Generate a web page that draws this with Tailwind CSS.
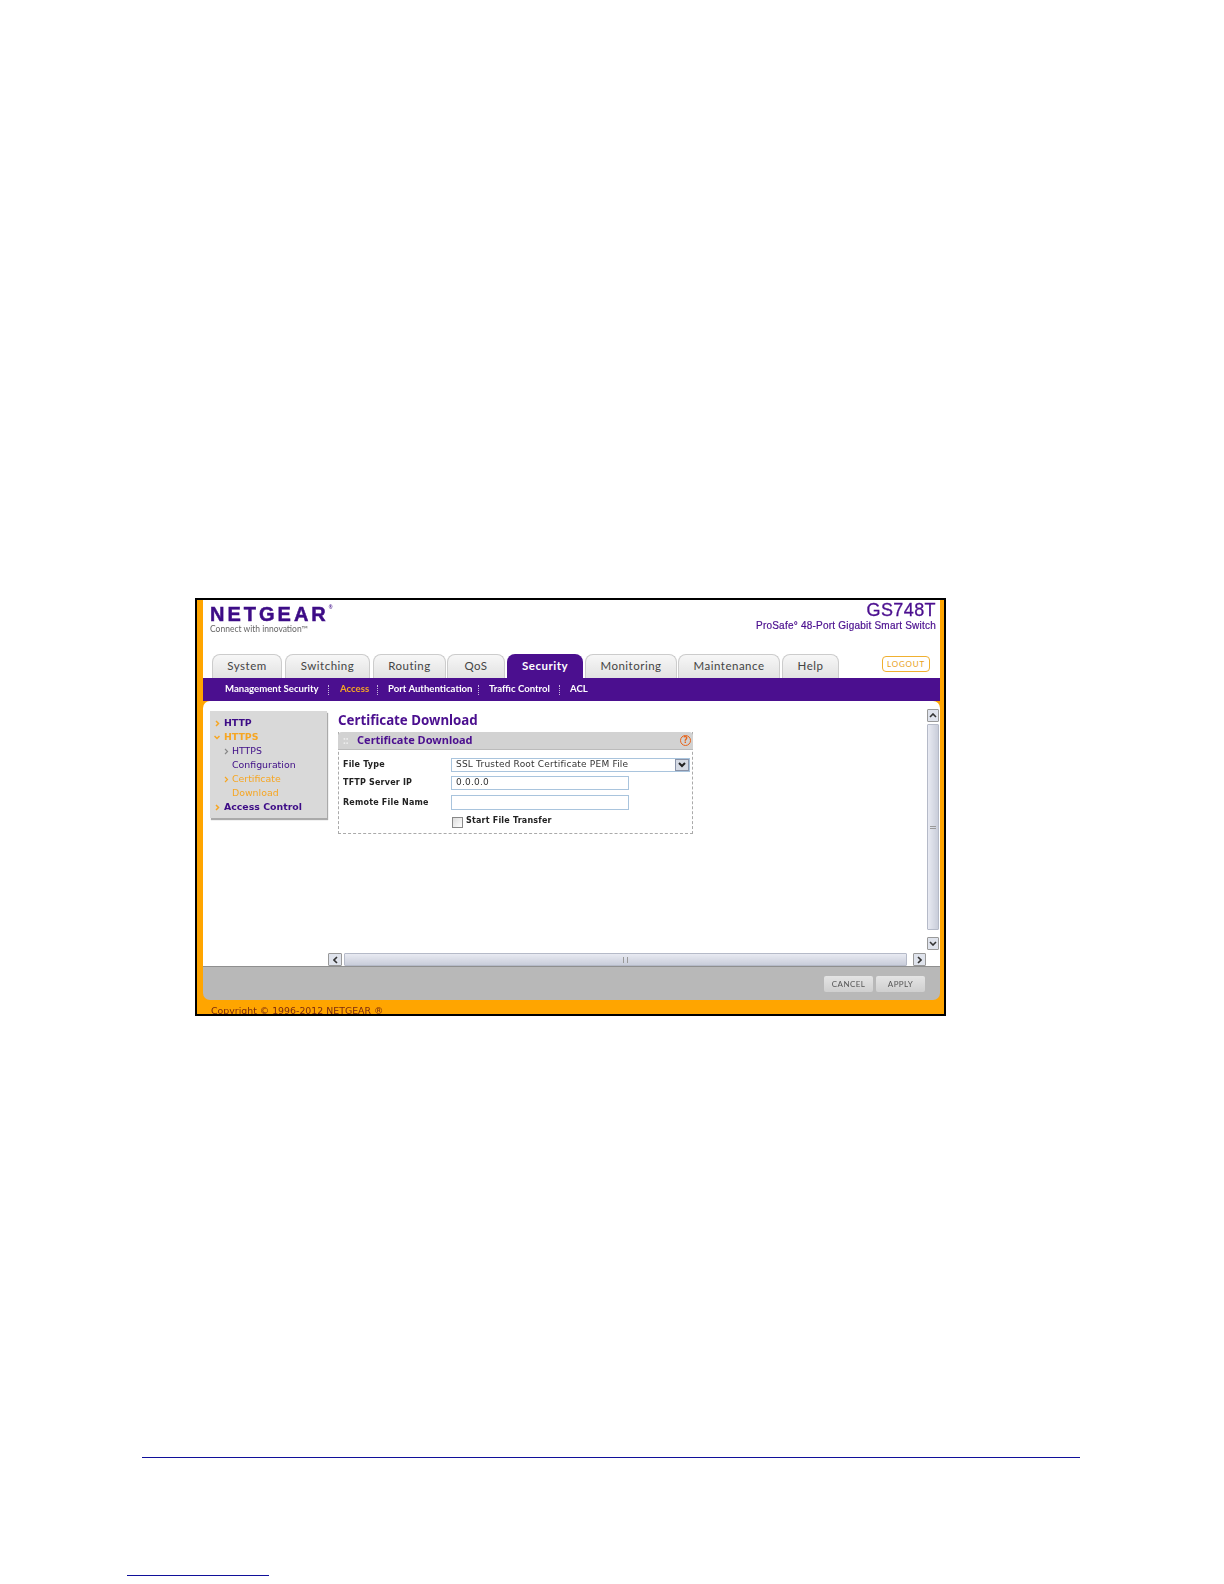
<!DOCTYPE html>
<html lang="en">
<head>
  <meta charset="UTF-8" />
  <title>Certificate Download</title>
  <script src="https://cdn.jsdelivr.net/npm/@tailwindcss/browser@4"></script>
</head>
<body class="bg-white">
  <div class="w-[1224px] h-[1584px] overflow-hidden relative pt-[598px]">

    <!-- switch admin screenshot -->
    <div class="ml-[195px] w-[751px] h-[418px] border-2 border-black bg-[#ffa500] pl-[6px] pr-[4px] font-['Lato',sans-serif]">
      <div class="blur-[0.35px]">

      <!-- header -->
      <div class="h-[54px] bg-white flex justify-between pl-[7px] pr-[4px]">
        <div class="pt-[3px]">
          <div class="h-[21px] flex items-start font-['Liberation_Sans',sans-serif] font-bold text-[20px] leading-[22px] tracking-[3px] text-[#3d0c86] [-webkit-text-stroke:0.5px_#3d0c86]">NETGEAR<span class="text-[5px] leading-[8px] tracking-normal [-webkit-text-stroke:0px]">®</span></div>
          <div class="text-[8.5px] leading-[11px] text-[#666]">Connect with innovation™</div>
        </div>
        <div class="text-right font-['Liberation_Sans',sans-serif] text-[#4b0f8f]">
          <div class="text-[18px] leading-[19px] mt-[1px] tracking-[0.4px] [-webkit-text-stroke:0.3px_#4b0f8f]">GS748T</div>
          <div class="text-[10px] leading-[11px] tracking-[0.22px] [-webkit-text-stroke:0.2px_#4b0f8f]">ProSafe° 48-Port Gigabit Smart Switch</div>
        </div>
      </div>

      <!-- tabs -->
      <div class="h-[24px] bg-white flex items-stretch text-[11.5px] tracking-[0.5px] text-[#444] relative">
        <div class="w-[9px]"></div>
        <div class="w-[70px] mr-[3px] rounded-t-[8px] border border-b-0 border-[#ccc] bg-gradient-to-b from-[#f7f7f7] to-[#e2e2e2] flex items-center justify-center pb-[1px]">System</div>
        <div class="w-[85px] mr-[3px] rounded-t-[8px] border border-b-0 border-[#ccc] bg-gradient-to-b from-[#f7f7f7] to-[#e2e2e2] flex items-center justify-center pb-[1px]">Switching</div>
        <div class="w-[73px] mr-[1px] rounded-t-[8px] border border-b-0 border-[#ccc] bg-gradient-to-b from-[#f7f7f7] to-[#e2e2e2] flex items-center justify-center pb-[1px]">Routing</div>
        <div class="w-[58px] mr-[2px] rounded-t-[8px] border border-b-0 border-[#ccc] bg-gradient-to-b from-[#f7f7f7] to-[#e2e2e2] flex items-center justify-center pb-[1px]">QoS</div>
        <div class="w-[76px] mr-[2px] rounded-t-[8px] bg-[#4b0f8f] text-white font-bold flex items-center justify-center pb-[1px]">Security</div>
        <div class="w-[92px] mr-[1px] rounded-t-[8px] border border-b-0 border-[#ccc] bg-gradient-to-b from-[#f7f7f7] to-[#e2e2e2] flex items-center justify-center pb-[1px]">Monitoring</div>
        <div class="w-[102px] mr-[2px] rounded-t-[8px] border border-b-0 border-[#ccc] bg-gradient-to-b from-[#f7f7f7] to-[#e2e2e2] flex items-center justify-center pb-[1px]">Maintenance</div>
        <div class="w-[57px] rounded-t-[8px] border border-b-0 border-[#ccc] bg-gradient-to-b from-[#f7f7f7] to-[#e2e2e2] flex items-center justify-center pb-[1px]">Help</div>
        <div class="ml-[43px] mt-[2px] w-[48px] h-[16px] rounded-[4px] border border-[#f0b030] text-[#e8a020] text-[8px] tracking-[0.8px] flex items-center justify-center">LOGOUT</div>
      </div>

      <!-- sub navigation -->
      <div class="h-[23px] bg-[#4b0f8f] flex items-center pl-[22px] text-[9.6px] font-bold text-white">
        <span class="w-[95px] whitespace-nowrap">Management Security</span>
        <span class="h-[10px] ml-[8px] mr-[11px] border-l border-dotted border-white/70"></span>
        <span class="w-[30px] text-[#f6a623]">Access</span>
        <span class="h-[10px] ml-[7px] mr-[10px] border-l border-dotted border-white/70"></span>
        <span class="w-[82px] whitespace-nowrap">Port Authentication</span>
        <span class="h-[10px] ml-[8px] mr-[10px] border-l border-dotted border-white/70"></span>
        <span class="w-[63px] whitespace-nowrap">Traffic Control</span>
        <span class="h-[10px] ml-[7px] mr-[10px] border-l border-dotted border-white/70"></span>
        <span>ACL</span>
      </div>

      <!-- main panel -->
      <div class="h-[265px] bg-white rounded-t-[7px] flex pt-[8px] font-['DejaVu_Sans',sans-serif]">
        <!-- left menu -->
        <div class="w-[125px] shrink-0 pl-[7px] pt-[2px]">
          <div class="w-[117px] h-[107px] bg-[#d9d9d9] shadow-[1px_2px_1px_#aaa] pt-[5px] text-[9.4px] leading-[14px] font-bold text-[#3d0c86]">
            <div class="flex items-center h-[14px] pl-[5px]">
              <svg width="5" height="7" viewBox="0 0 5 7" fill="none" stroke="#f6a623" stroke-width="1.5" class="mr-[4px]"><path d="M1 1l2.5 2.5L1 6"/></svg>HTTP
            </div>
            <div class="flex items-center h-[14px] pl-[4px] text-[#f6a623]">
              <svg width="6" height="5" viewBox="0 0 6 5" fill="none" stroke="#f6a623" stroke-width="1.5" class="mr-[4px]"><path d="M.5 1L3 3.5 5.5 1"/></svg>HTTPS
            </div>
            <div class="flex items-center h-[14px] pl-[14px] font-normal">
              <svg width="5" height="7" viewBox="0 0 5 7" fill="none" stroke="#888" stroke-width="1.2" class="mr-[3px]"><path d="M1 1l2.5 2.5L1 6"/></svg>HTTPS
            </div>
            <div class="h-[14px] pl-[22px] font-normal">Configuration</div>
            <div class="flex items-center h-[14px] pl-[14px] font-normal text-[#f6a623]">
              <svg width="5" height="7" viewBox="0 0 5 7" fill="none" stroke="#f6a623" stroke-width="1.2" class="mr-[3px]"><path d="M1 1l2.5 2.5L1 6"/></svg>Certificate
            </div>
            <div class="h-[14px] pl-[22px] font-normal text-[#f6a623]">Download</div>
            <div class="flex items-center h-[14px] pl-[5px]">
              <svg width="5" height="7" viewBox="0 0 5 7" fill="none" stroke="#f6a623" stroke-width="1.5" class="mr-[4px]"><path d="M1 1l2.5 2.5L1 6"/></svg>Access Control
            </div>
          </div>
        </div>

        <!-- right part -->
        <div class="w-[612px] flex flex-col">
          <div class="h-[241px] flex">
            <div class="w-[599px] pl-[10px] pt-[4px]">
              <h1 class="h-[19px] text-[13.3px] leading-[15px] font-bold text-[#4b0f8f] whitespace-nowrap font-['Noto_Sans',sans-serif]">Certificate Download</h1>
              <div class="w-[355px] h-[102px] border border-dashed border-[#aaa] border-t-0">
                <div class="h-[18px] -mx-px rounded-t-[4px] bg-[#d2d2d2] flex items-center justify-between pl-[5px] pr-[2px] border-b border-[#bbb]">
                  <span class="flex items-center text-[11px] font-bold text-[#4b0f8f] whitespace-nowrap font-['Noto_Sans',sans-serif]"><span class="w-[14px] text-[#eee] text-[10px]">::</span>Certificate Download</span>
                  <span class="w-[11px] h-[11px] rounded-full border border-[#e8641a] text-[#e8641a] text-[8px] leading-[9px] text-center font-bold">?</span>
                </div>
                <div class="grid grid-cols-[108px_1fr] pl-[4px] text-[8px] font-bold text-[#222] tracking-[0.2px]">
                  <div class="h-[24px] flex items-center pt-[6px]">File Type</div>
                  <div class="h-[24px] pt-[8px] flex">
                    <div class="w-[239px] h-[14px] border border-[#a9c4dd] flex items-center justify-between pl-[4px] font-normal text-[9px] text-[#333] whitespace-nowrap">
                      SSL Trusted Root Certificate PEM File
                      <span class="w-[14px] h-[12px] bg-[#d5dae4] border border-[#8a93a8] flex items-center justify-center">
                        <svg width="8" height="6" viewBox="0 0 8 6" fill="none" stroke="#222" stroke-width="2"><path d="M1 1l3 3 3-3"/></svg>
                      </span>
                    </div>
                  </div>
                  <div class="h-[17px] flex items-center">TFTP Server IP</div>
                  <div class="h-[17px] flex items-center">
                    <div class="w-[178px] h-[14px] border border-[#a9c4dd] flex items-center pl-[4px] font-normal text-[9px] text-[#333]">0.0.0.0</div>
                  </div>
                  <div class="h-[23px] flex items-center">Remote File Name</div>
                  <div class="h-[23px] flex items-center">
                    <div class="w-[178px] h-[15px] border border-[#a9c4dd]"></div>
                  </div>
                  <div></div>
                  <div class="flex items-center pt-[2px]">
                    <span class="w-[11px] h-[11px] ml-[1px] mt-[1px] border border-[#888] bg-gradient-to-br from-[#ddd] to-white"></span>
                    <span class="ml-[3px] -mt-[3px]">Start File Transfer</span>
                  </div>
                </div>
              </div>
            </div>

            <!-- vertical scrollbar -->
            <div class="w-[12px] flex flex-col">
              <div class="h-[13px] border border-[#999] bg-[#dfe3ec] flex items-center justify-center rounded-[1px]">
                <svg width="8" height="5" viewBox="0 0 8 5" fill="none" stroke="#333" stroke-width="1.6"><path d="M1 4l3-3 3 3"/></svg>
              </div>
              <div class="h-[206px] my-[2px] border border-[#b5bac8] bg-gradient-to-r from-[#e8eaf2] to-[#c9cdda] flex items-center justify-center rounded-[1px]">
                <div class="w-[6px] h-[3px] border-y border-[#999]"></div>
              </div>
              <div class="h-[13px] mt-[5px] border border-[#999] bg-[#dfe3ec] flex items-center justify-center rounded-[1px]">
                <svg width="8" height="5" viewBox="0 0 8 5" fill="none" stroke="#333" stroke-width="1.6"><path d="M1 1l3 3 3-3"/></svg>
              </div>
            </div>
          </div>

          <!-- horizontal scrollbar -->
          <div class="h-[13px] mt-[3px] flex">
            <div class="w-[14px] border border-[#999] bg-[#dfe3ec] flex items-center justify-center rounded-[1px]">
              <svg width="5" height="8" viewBox="0 0 5 8" fill="none" stroke="#333" stroke-width="1.6"><path d="M4 1L1 4l3 3"/></svg>
            </div>
            <div class="w-[563px] ml-[2px] border border-[#b5bac8] bg-gradient-to-b from-[#e8eaf2] to-[#c9cdda] flex items-center justify-center rounded-[1px]">
              <div class="w-[5px] h-[6px] border-x border-[#999]"></div>
            </div>
            <div class="w-[13px] ml-[6px] border border-[#999] bg-[#dfe3ec] flex items-center justify-center rounded-[1px]">
              <svg width="5" height="8" viewBox="0 0 5 8" fill="none" stroke="#333" stroke-width="1.6"><path d="M1 1l3 3-3 3"/></svg>
            </div>
          </div>
        </div>
      </div>

      <!-- footer buttons -->
      <div class="h-[34px] bg-[#b8b8b8] border-t border-[#8f8f8f] rounded-b-[7px] flex justify-end items-start pt-[9px] pr-[15px] gap-[3px] text-[8px] tracking-[0.4px] text-[#555]">
        <div class="w-[49px] h-[16px] rounded-[2px] bg-gradient-to-b from-[#e4e4e4] to-[#cfcfcf] flex items-center justify-center">CANCEL</div>
        <div class="w-[49px] h-[16px] rounded-[2px] bg-gradient-to-b from-[#e4e4e4] to-[#cfcfcf] flex items-center justify-center">APPLY</div>
      </div>

      <!-- copyright -->
      <div class="h-[14px] pl-[8px] pt-[5px] text-[9.4px] leading-[12px] overflow-hidden text-[#7a2a10] font-['DejaVu_Sans',sans-serif] whitespace-nowrap">Copyright © 1996-2012 NETGEAR ®</div>
      </div>
    </div>

    <!-- page rules -->
    <div class="ml-[142px] w-[938px] h-px bg-[#10109a] mt-[441px]"></div>
    <div class="ml-[127px] w-[142px] h-px bg-[#10109a] mt-[117px]"></div>
  </div>
</body>
</html>
